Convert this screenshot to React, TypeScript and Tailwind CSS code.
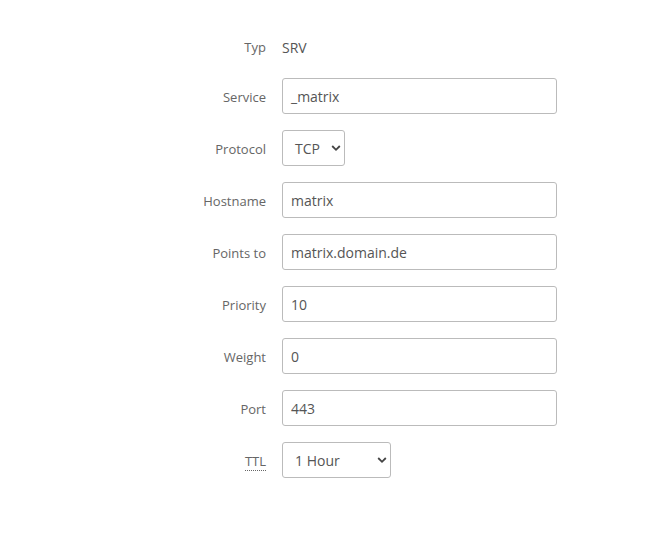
import React from "react";

const Chevron = () => (
  <svg width="10" height="10" viewBox="0 0 10 10" className="pointer-events-none absolute right-[3px] top-1/2 -translate-y-1/2">
    <path d="M1.2 3 L5 6.8 L8.8 3" fill="none" stroke="#444" strokeWidth="1.8" />
  </svg>
);

function Row({ label, children, abbr }: { label: string; children: React.ReactNode; abbr?: boolean }) {
  return (
    <div className="flex items-center h-9">
      <div className="w-[282px] pr-[16px] pt-[3px] text-right text-[13px] text-[#666]">
        {abbr ? (
          <span className="border-b border-dotted border-[#666]">{label}</span>
        ) : (
          label
        )}
      </div>
      {children}
    </div>
  );
}

function Input({ value }: { value: string }) {
  return (
    <div className="w-[275px] h-9 border border-[#bbb] rounded-[3px] pl-[8px] flex items-center text-[14px] text-[#555] bg-white">
      {value}
    </div>
  );
}

function Select({ value, width }: { value: string; width: string }) {
  return (
    <div className={`relative h-9 border border-[#bbb] rounded-[3px] pl-[12px] flex items-center text-[14px] text-[#555] bg-white ${width}`}>
      {value}
      <Chevron />
    </div>
  );
}

export default function App() {
  return (
    <div className="w-[650px] h-[542px] bg-white" style={{ fontFamily: '"Open Sans", sans-serif' }}>
      <div className="pt-[29px] flex flex-col gap-4">
        <div className="flex items-center h-[33px] pt-[4px]">
          <div className="w-[282px] pr-[16px] text-right text-[13px] text-[#666]">Typ</div>
          <div className="text-[14px] text-[#555]">SRV</div>
        </div>
        <Row label="Service"><Input value="_matrix" /></Row>
        <Row label="Protocol"><Select value="TCP" width="w-[63px]" /></Row>
        <Row label="Hostname"><Input value="matrix" /></Row>
        <Row label="Points to"><Input value="matrix.domain.de" /></Row>
        <Row label="Priority"><Input value="10" /></Row>
        <Row label="Weight"><Input value="0" /></Row>
        <Row label="Port"><Input value="443" /></Row>
        <Row label="TTL" abbr><Select value="1 Hour" width="w-[109px]" /></Row>
      </div>
    </div>
  );
}
